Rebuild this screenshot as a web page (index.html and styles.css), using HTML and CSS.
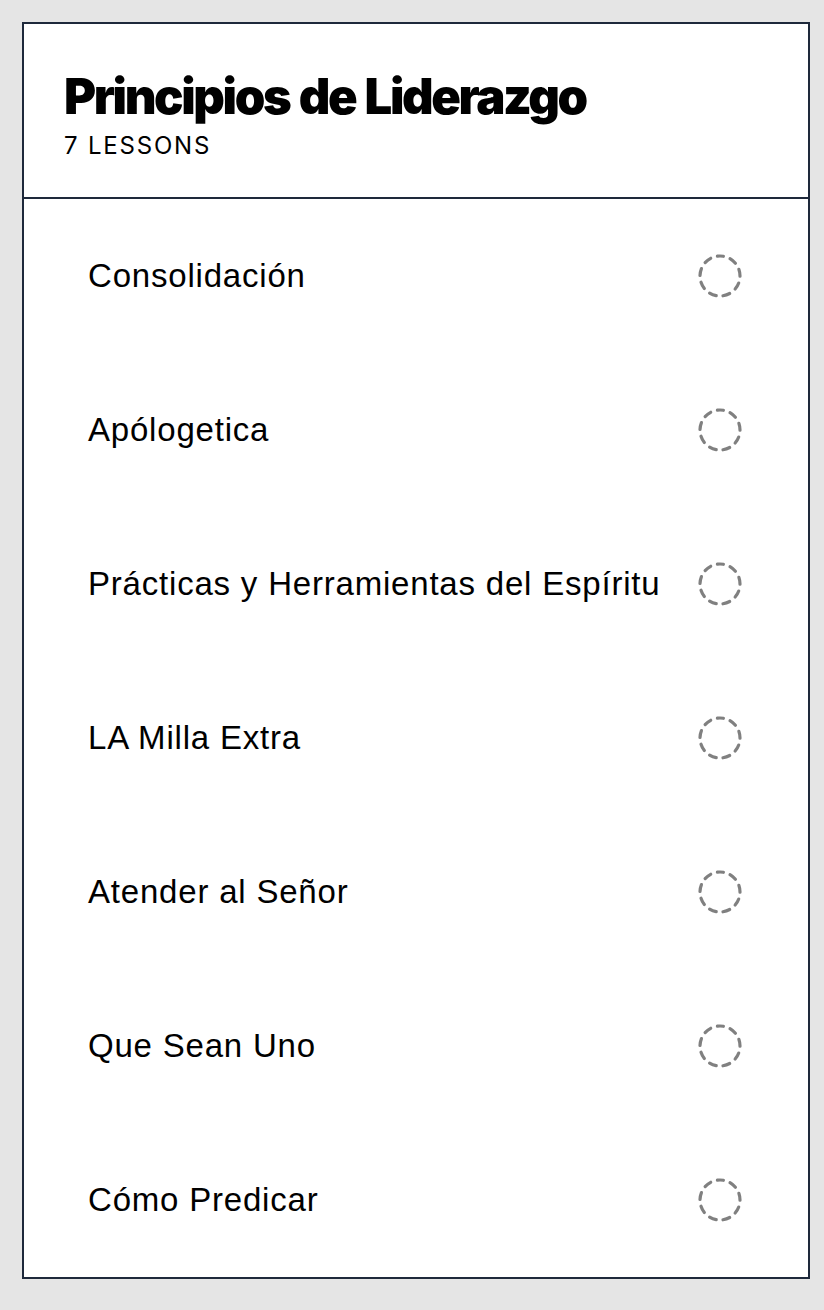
FILE: index.html
```html
<!DOCTYPE html>
<html lang="es">
<head>
  <meta charset="UTF-8" />
  <meta name="viewport" content="width=device-width, initial-scale=1" />
  <title>Principios de Liderazgo</title>
  <link rel="stylesheet" href="styles.css">
</head>
<body>
  <div class="curso">
    <div class="cabecera">
      <h1>Principios de Liderazgo</h1>
      <div class="contador">7 Lessons</div>
    </div>

    <ul class="lecciones">
      <li class="leccion">
        <span>Consolidación</span>
        <svg class="estado" viewBox="0 0 44 44"><circle cx="22" cy="22" r="20" /></svg>
      </li>
      <li class="leccion">
        <span>Apólogetica</span>
        <svg class="estado" viewBox="0 0 44 44"><circle cx="22" cy="22" r="20" /></svg>
      </li>
      <li class="leccion">
        <span>Prácticas y Herramientas del Espíritu</span>
        <svg class="estado" viewBox="0 0 44 44"><circle cx="22" cy="22" r="20" /></svg>
      </li>
      <li class="leccion">
        <span>LA Milla Extra</span>
        <svg class="estado" viewBox="0 0 44 44"><circle cx="22" cy="22" r="20" /></svg>
      </li>
      <li class="leccion">
        <span>Atender al Señor</span>
        <svg class="estado" viewBox="0 0 44 44"><circle cx="22" cy="22" r="20" /></svg>
      </li>
      <li class="leccion">
        <span>Que Sean Uno</span>
        <svg class="estado" viewBox="0 0 44 44"><circle cx="22" cy="22" r="20" /></svg>
      </li>
      <li class="leccion">
        <span>Cómo Predicar</span>
        <svg class="estado" viewBox="0 0 44 44"><circle cx="22" cy="22" r="20" /></svg>
      </li>
    </ul>
  </div>
</body>
</html>
```

FILE: styles.css
```css
html, body {
  margin: 0;
  padding: 0;
  background: #e5e5e5;
  font-family: 'Liberation Sans', Arial, sans-serif;
  color: #000;
}

body {
  padding: 22px;
}

.curso {
  width: 784px;
  background: #fff;
  border: 2px solid #1e293b;
}

.cabecera {
  height: 175px;
  box-sizing: border-box;
  padding: 47px 40px 0 40px;
  border-bottom: 2px solid #1e293b;
}

h1 {
  margin: 0 0 10px;
  font-family: Inter, 'Noto Sans', sans-serif;
  font-weight: 900;
  font-size: 49px;
  line-height: 52px;
  letter-spacing: -2.4px;
  word-spacing: 2px;
}

.contador {
  font-family: Inter, 'Noto Sans', sans-serif;
  font-size: 24px;
  line-height: 26px;
  letter-spacing: 1.8px;
  text-transform: uppercase;
}

.lecciones {
  list-style: none;
  margin: 0;
  padding: 0;
}

.leccion {
  height: 154px;
  display: flex;
  align-items: center;
  justify-content: space-between;
  padding: 0 66px 0 64px;
  font-size: 33px;
  letter-spacing: 0.8px;
}

.estado {
  width: 44px;
  height: 44px;
  flex-shrink: 0;
}

.estado circle {
  fill: none;
  stroke: #808080;
  stroke-width: 3.2;
  stroke-linecap: round;
  stroke-dasharray: 7 6.963;
  stroke-dashoffset: 3.5;
  transform: rotate(-90deg);
  transform-origin: 22px 22px;
}
```
